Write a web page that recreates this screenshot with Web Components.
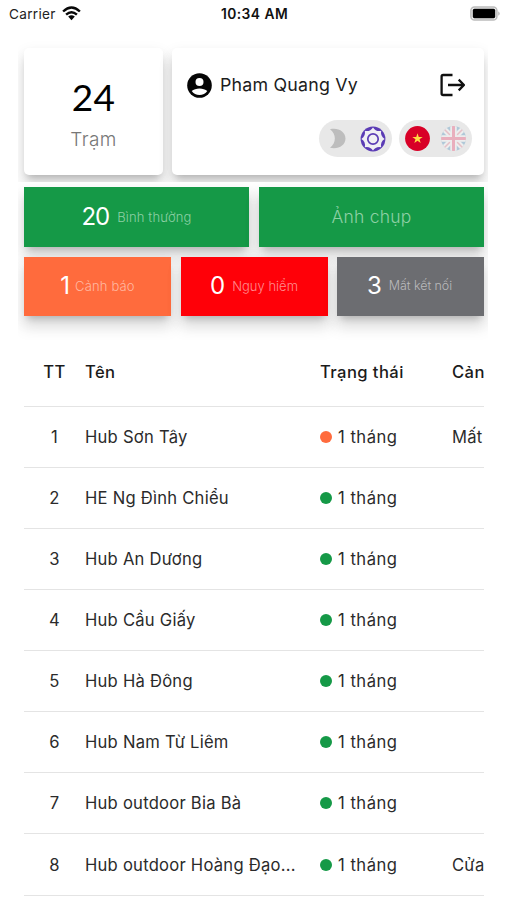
<!DOCTYPE html>
<html lang="vi">
<head>
<meta charset="utf-8">
<title>Hub</title>
<style>
body{margin:0;width:507px;height:900px;overflow:hidden;background:#fff}
</style>
</head>
<body>
<hub-app></hub-app>
<script>
const define=(name,html)=>customElements.define(name,class extends HTMLElement{
  connectedCallback(){
    if(this.shadowRoot)return;
    const root=this.attachShadow({mode:'open'});
    root.innerHTML=typeof html==='function'?html(this):html;
  }
});

define('status-bar',`<style>
:host{display:grid;grid-template-columns:1fr auto 1fr;align-items:center;height:28px;box-sizing:border-box;padding:0 6px 0 9px;font:13.6px Inter,sans-serif;color:#222}
.l{display:flex;align-items:center;gap:6px}
.l svg{margin-top:-2px}
.l span{letter-spacing:.3px}
b{font-size:13.800px;font-weight:600;letter-spacing:.45px;color:#111;margin-right:1px}
.r{justify-self:end;display:block;margin-top:-2px}
svg{display:block}
</style>
<div class="l"><span>Carrier</span><svg width="19" height="15" viewBox="0 0 19 15" fill="none" stroke="#080808" stroke-width="2.4"><path d="M1.1 5.5Q9.5-2.6 17.9 5.5M4.1 8.7Q9.5 3.6 14.9 8.7"/><path d="M6.2 10.6Q9.5 7.8 12.8 10.6L9.5 14.2Z" fill="#080808" stroke="none"/></svg></div>
<b>10:34 AM</b>
<svg class="r" width="31" height="15" viewBox="0 0 31 15"><rect x=".9" y=".9" width="26" height="13.2" rx="3.6" fill="#eee" stroke="#bcbcbc" stroke-width="1.5"/><rect x="2.8" y="2.8" width="22.4" height="9.4" rx="1.6" fill="#000"/><path d="M28.4 5.2q2.4 2.3 0 4.6z" fill="#aaa"/></svg>`);

define('paper-card',`<style>
:host{display:block;box-sizing:border-box;background:#fff;border-radius:5px;box-shadow:0 6px 7px -4px rgba(0,0,0,.2),0 11px 14px 1px rgba(0,0,0,.1),0 5px 14px 2px rgba(0,0,0,.06)}
</style><slot></slot>`);

define('station-total',`<style>
:host{display:flex;flex-direction:column;align-items:center;height:127px;box-sizing:border-box;padding-top:27px;color:#000}
.n{font:37px/44px Lato,sans-serif;letter-spacing:.4px}
.t{font:300 19px/26px Inter,sans-serif;color:#777;margin-top:8px;letter-spacing:.4px}
</style><div class="n"><slot name="value"></slot></div><div class="t"><slot></slot></div>`);

define('switch-pill',`<style>
:host{display:flex;align-items:center;justify-content:space-between;width:73px;height:37px;box-sizing:border-box;padding:0 6px;border-radius:19px;background:#e8e8e8}
</style><slot></slot>`);

define('moon-icon',`<style>:host,svg{display:block}</style><svg width="25" height="25" viewBox="0 0 25 25"><path d="M5 3.200C13 1.200 20.500 5.500 20.500 12.500S13 23.800 5 21.800C11.500 17 11.500 8 5 3.200Z" fill="#bdbdbd"/></svg>`);

// Eight-petal rosette inside a ring, generated around the centre.
define('sun-icon',()=>{
  const at=(r,a)=>{const t=a*Math.PI/180;return (13+r*Math.cos(t)).toFixed(2)+' '+(13+r*Math.sin(t)).toFixed(2)};
  let d='M'+at(11.6,0);
  for(let a=0;a<360;a+=45)d+='Q'+at(7.6,a+22.5)+' '+at(11.6,a+45);
  return `<style>:host,svg{display:block}</style><svg width="26" height="26" viewBox="0 0 26 26"><circle cx="13" cy="13" r="12.400" fill="#5b3cb5"/><path d="${d}Z" fill="#f0eff4"/><circle cx="13" cy="13" r="5.200" fill="none" stroke="#5b3cb5" stroke-width="1.700"/></svg>`;
});

define('vn-flag',`<style>:host,svg{display:block}</style><svg width="25" height="25" viewBox="0 0 25 25"><circle cx="12.500" cy="12.500" r="12.400" fill="#d80027"/><path d="M12.500 7.200L13.750 11H17.700L14.500 13.300 15.700 17.100 12.500 14.750 9.300 17.100 10.500 13.300 7.300 11H11.250Z" fill="#ffda44"/></svg>`);

define('uk-flag',`<style>:host,svg{display:block}svg{opacity:.24}</style><svg width="25" height="25" viewBox="0 0 25 25"><defs><clipPath id="c"><circle cx="12.500" cy="12.500" r="12.400"/></clipPath></defs><g clip-path="url(#c)"><path d="M0 0h25v25H0z" fill="#0067a8"/><path d="M0 0L25 25M25 0L0 25" stroke="#fff" stroke-width="5.500"/><path d="M0 0L25 25M25 0L0 25" stroke="#e3405f" stroke-width="1.500"/><path d="M12.500 0V25M0 12.500H25" stroke="#fff" stroke-width="6.500"/><path d="M12.500 0V25M0 12.500H25" stroke="#f00038" stroke-width="3"/></g></svg>`);

define('user-panel',`<style>
:host{display:flex;flex-direction:column;height:127px;box-sizing:border-box;padding:23px 12px 0 15px}
.top{display:flex;align-items:center;height:28px;font:17.8px/28px Inter,sans-serif;color:#1c1c1c}
.top span{margin-left:8px;letter-spacing:.22px;margin-top:-1px}
.out{margin-left:auto;margin-right:7px}
.bot{display:flex;justify-content:flex-end;gap:7px;margin-top:21px}
svg{display:block}
</style>
<div class="top"><svg width="25" height="25" viewBox="0 0 25 25"><circle cx="12.500" cy="12.500" r="12.300" fill="#050505"/><circle cx="12.500" cy="9.100" r="4" fill="#fff"/><path d="M4.700 18.100C8.300 14.500 16.700 14.500 20.300 18.100C17 23.300 8 23.300 4.700 18.100Z" fill="#fff"/></svg>
<span><slot></slot></span>
<svg class="out" width="25" height="24" viewBox="0 0 25 24" fill="none" stroke="#101010" stroke-width="2.300"><path d="M12.500 2H3.200Q1.600 2 1.600 3.600V20.400Q1.600 22 3.200 22H12.500M8 12H24M18.700 6.600L24 12 18.700 17.400"/></svg></div>
<div class="bot"><switch-pill><moon-icon></moon-icon><sun-icon></sun-icon></switch-pill><switch-pill><vn-flag></vn-flag><uk-flag></uk-flag></switch-pill></div>`);

define('stat-tile',`<style>
:host{display:flex;align-items:center;justify-content:center;gap:var(--gap,8px);background:var(--bg);color:#fff;box-sizing:border-box;padding-right:var(--pr,0);padding-bottom:1px;box-shadow:0 6px 7px -4px rgba(0,0,0,.2),0 11px 14px 1px rgba(0,0,0,.1),0 5px 14px 2px rgba(0,0,0,.06);white-space:nowrap}
::slotted([slot=value]){font:24px/30px Inter,sans-serif;letter-spacing:-1px}
.t{font:300 var(--fs,13px)/26px Inter,sans-serif;color:var(--fg);letter-spacing:var(--ls,.15px)}
</style><slot name="value"></slot><span class="t"><slot></slot></span>`);

define('hub-summary',`<style>
:host{display:block}
section{overflow:hidden;margin-left:18px;width:470px;box-sizing:border-box;padding:0 4px 0 6px}
.a{display:grid;grid-template-columns:139px 312px;align-items:start;gap:9px;height:154px;padding-top:20px}
.b{display:flex;flex-direction:column;gap:10px;height:158px;padding-top:5px}
.r{display:grid;gap:10px;height:60px;flex:none;grid-template-columns:1fr 1fr}
.r+.r{gap:9.500px;grid-template-columns:1fr 1fr 1fr;height:59px}
.g{--bg:#159947;--fg:#8ed0a5}
</style>
<section class="a"><paper-card><station-total><span slot="value">24</span>Trạm</station-total></paper-card><paper-card><user-panel>Pham Quang Vy</user-panel></paper-card></section>
<section class="b"><div class="r"><stat-tile class="g"><span slot="value">20</span>Bình thường</stat-tile><stat-tile class="g" style="--fs:17.500px;--ls:.2px"><span>Ảnh chụp</span></stat-tile></div>
<div class="r"><stat-tile style="--bg:#ff6b3d;--fg:#ffb9a2;--gap:6px"><span slot="value">1</span>Cảnh báo</stat-tile><stat-tile style="--bg:#ff0008;--fg:#ff8b8f;--ls:0px"><span slot="value">0</span>Nguy hiểm</stat-tile><stat-tile style="--bg:#6c6d71;--fg:#bababc;--fs:12.500px;--ls:-.05px;--pr:2px"><span slot="value">3</span>Mất kết nối</stat-tile></div></section>`);

define('hub-row',`<style>
:host{display:grid;grid-template-columns:61px 235px 132px 1fr;align-items:center;height:61.120px;box-sizing:border-box;border-bottom:1.500px solid #e4e4e4;font:16.600px/24px Inter,sans-serif;color:#2b2b2b;white-space:nowrap;overflow:hidden;letter-spacing:.24px}
:host([head]){height:66.700px;font-weight:500;color:#1b1b1b;padding-bottom:2px;letter-spacing:.42px}
.n{text-align:center}
.s{display:flex;align-items:center;gap:6px}
:host([dot]) .s{letter-spacing:.5px}
:host([dot]) .s::before{content:"";width:12px;height:12px;border-radius:50%;background:#159947}
:host([dot=warn]) .s::before{background:#ff6b3d}
</style><span class="n"><slot name="n"></slot></span><span><slot></slot></span><span class="s"><slot name="s"></slot></span><span><slot name="w"></slot></span>`);

define('hub-table',()=>{
  const rows=[['Hub Sơn Tây','Mất'],['HE Ng Đình Chiểu',''],['Hub An Dương',''],['Hub Cầu Giấy',''],['Hub Hà Đông',''],['Hub Nam Từ Liêm',''],['Hub outdoor Bia Bà',''],['Hub outdoor Hoàng Đạo...','Cửa']];
  return `<style>:host{display:block;width:460px;margin-left:24px}</style>
<hub-row head><span slot="n">TT</span>Tên<span slot="s">Trạng thái</span><span slot="w">Cản</span></hub-row>`+
  rows.map(([name,w],i)=>`<hub-row dot="${i?'ok':'warn'}"><span slot="n">${i+1}</span>${name}<span slot="s">1 tháng</span><span slot="w">${w}</span></hub-row>`).join('');
});

define('hub-app',`<style>:host{display:block}</style><status-bar></status-bar><hub-summary></hub-summary><hub-table></hub-table>`);
</script>
</body>
</html>
